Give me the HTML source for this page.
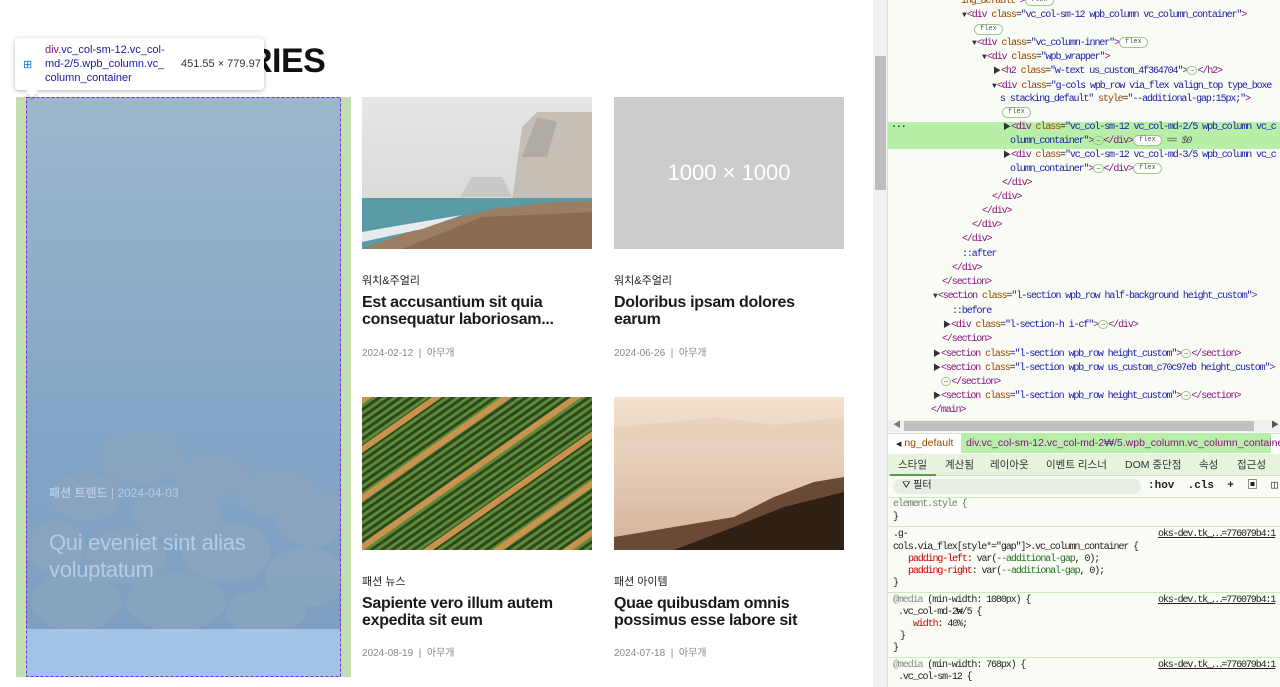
<!DOCTYPE html>
<html><head><meta charset="utf-8"><style>
*{margin:0;padding:0;box-sizing:border-box}
body{width:1280px;height:687px;overflow:hidden;background:#fff;font-family:"Liberation Sans","Noto Sans CJK KR",sans-serif;position:relative}
.a{position:absolute}
.cat{font-size:11px;color:#222}
.ttl{font-size:16px;font-weight:bold;color:#1a1a1a;line-height:17px;letter-spacing:-0.3px}
.meta{font-size:10px;color:#888}
.dt{position:absolute;left:887px;top:0;width:393px;height:687px;background:#f9fcf4;border-left:1px solid #cfe8c0;font-family:"Liberation Mono","Noto Sans CJK KR",monospace;font-size:10px;letter-spacing:-1.1px;color:#222;overflow:hidden}
.l{position:absolute;white-space:nowrap;line-height:14px}
.t{color:#881280}.n{color:#994500}.v{color:#1a1aa6}.b{color:#1a1aa6}
.fx{display:inline-block;border:1px solid #9bc98a;border-radius:7px;font-size:7px;line-height:9px;padding:0 5px;color:#555;vertical-align:middle;background:#fff;letter-spacing:0}
.dd{display:inline-block;border:1px solid #9bc98a;border-radius:5px;font-size:7px;line-height:7px;padding:0 2px;vertical-align:middle;letter-spacing:0}
.tri{font-size:8px;color:#333;letter-spacing:0}
</style></head><body>
<div class="a" style="left:248px;top:42px;font-size:34px;font-weight:bold;color:#111;letter-spacing:-0.5px">RIES</div>
<div class="a" style="left:16px;top:97px;width:335px;height:580px;background:#c3dfb1"></div>
<div class="a" style="left:26px;top:97px;width:315px;height:580px;overflow:hidden">
<svg width="315" height="580" viewBox="0 0 315 580">
<defs><linearGradient id="sky" x1="0" y1="0" x2="0" y2="1"><stop offset="0" stop-color="#9db7cd"/><stop offset="0.6" stop-color="#84a6c6"/><stop offset="1" stop-color="#7e9fc0"/></linearGradient></defs>
<rect width="315" height="532" fill="url(#sky)"/>
<g fill="#8aa5bf" opacity=".8">
<ellipse cx="115" cy="360" rx="42" ry="26"/>
<ellipse cx="185" cy="378" rx="36" ry="22"/>
<ellipse cx="60" cy="400" rx="35" ry="24"/>
<ellipse cx="150" cy="415" rx="45" ry="28"/>
<ellipse cx="250" cy="395" rx="40" ry="24"/>
<ellipse cx="285" cy="420" rx="35" ry="30"/>
<ellipse cx="30" cy="450" rx="30" ry="26"/>
<ellipse cx="100" cy="460" rx="40" ry="28"/>
<ellipse cx="200" cy="455" rx="45" ry="30"/>
<ellipse cx="280" cy="480" rx="40" ry="30"/>
<ellipse cx="50" cy="505" rx="45" ry="28"/>
<ellipse cx="150" cy="505" rx="50" ry="28"/>
<ellipse cx="240" cy="515" rx="40" ry="22"/>
</g>
<rect y="532" width="315" height="48" fill="#a0c3e6"/>
<rect x="0.5" y="0.5" width="314" height="579" fill="none" stroke="#7a2fd0" stroke-width="1" stroke-dasharray="3,2"/>
</svg>
<div class="a" style="left:23px;top:387px;font-size:12px;color:#b5cbe3"><b>패션 트렌드</b> | 2024-04-03</div>
<div class="a" style="left:23px;top:432px;font-size:22px;line-height:27px;color:#b5cbe6;letter-spacing:-0.3px">Qui eveniet sint alias<br>voluptatum</div>
</div>
<div class="a" style="left:15px;top:38px;width:249px;height:52px;background:#fff;border-radius:4px;box-shadow:0 1px 4px rgba(0,0,0,.3)"></div>
<div class="a" style="left:28px;top:88px;width:8px;height:8px;background:#fff;transform:rotate(45deg);box-shadow:2px 2px 2px rgba(0,0,0,.15)"></div>
<div class="a" style="left:23px;top:58px;font-size:11px;color:#1a73e8">⊞</div>
<div class="a" style="left:45px;top:43px;font-size:11px;line-height:14px;color:#1a1aa6"><span style="color:#881280">div</span>.vc_col-sm-12.vc_col-<br>md-2/5.wpb_column.vc_<br>column_container</div>
<div class="a" style="left:181px;top:58px;font-size:11px;color:#333">451.55 × 779.97</div>
<svg class="a" style="left:362px;top:97px" width="230" height="152" viewBox="0 0 230 152">
<defs><linearGradient id="fog" x1="0" y1="0" x2="0" y2="1"><stop offset="0" stop-color="#e6e7e5"/><stop offset="1" stop-color="#d3d6d4"/></linearGradient></defs>
<rect width="230" height="152" fill="url(#fog)"/>
<polygon points="98,100 110,80 140,80 150,100" fill="#c7c9c7"/>
<polygon points="150,105 160,30 175,15 230,15 230,110" fill="#c6bfb5"/>
<polygon points="160,60 175,20 195,25 185,60" fill="#9a9a94" opacity=".5"/>
<rect y="101" width="230" height="51" fill="#5a9ba6"/>
<polygon points="0,152 60,130 130,112 190,105 230,104 230,152" fill="#9c7f63"/>
<polygon points="0,135 40,128 100,118 60,132 0,145" fill="#e6ecee"/>
<polygon points="40,152 120,120 230,115 230,152" fill="#8a6b52"/>
</svg>
<div class="a" style="left:614px;top:97px;width:230px;height:152px;background:#cccccc;color:#fff;font-size:22px;text-align:center;line-height:152px">1000 × 1000</div>
<svg class="a" style="left:362px;top:397px" width="230" height="153" viewBox="0 0 230 153">
<defs><pattern id="row" width="6" height="6" patternUnits="userSpaceOnUse" patternTransform="rotate(55)"><rect width="6" height="6" fill="#2c4a1c"/><rect width="3" height="6" fill="#5e8a3a"/></pattern>
<pattern id="band" width="40" height="40" patternUnits="userSpaceOnUse" patternTransform="rotate(55)"><rect x="0" width="6" height="40" fill="#c9934e"/></pattern></defs>
<rect width="230" height="153" fill="url(#row)"/>
<rect width="230" height="153" fill="url(#band)"/>
</svg>
<svg class="a" style="left:614px;top:397px" width="230" height="153" viewBox="0 0 230 153">
<defs><linearGradient id="sep" x1="0" y1="0" x2="0" y2="1"><stop offset="0" stop-color="#f3e2cf"/><stop offset="1" stop-color="#d4b29a"/></linearGradient></defs>
<rect width="230" height="153" fill="url(#sep)"/>
<polygon points="0,30 60,25 100,20 160,28 230,20 230,45 0,45" fill="#e6cdb6" opacity=".6"/>
<polygon points="0,140 60,130 120,120 160,100 200,85 230,80 230,153 0,153" fill="#6a4a35"/>
<polygon points="60,153 120,130 170,110 230,95 230,153" fill="#2f1f15"/>
</svg>
<div class="a cat" style="left:362px;top:272px">워치&amp;주얼리</div>
<div class="a ttl" style="left:362px;top:294px">Est accusantium sit quia<br>consequatur laboriosam...</div>
<div class="a meta" style="left:362px;top:344px">2024-02-12 &nbsp;|&nbsp; 아무개</div>
<div class="a cat" style="left:614px;top:272px">워치&amp;주얼리</div>
<div class="a ttl" style="left:614px;top:294px">Doloribus ipsam dolores<br>earum</div>
<div class="a meta" style="left:614px;top:344px">2024-06-26 &nbsp;|&nbsp; 아무개</div>
<div class="a cat" style="left:362px;top:573px">패션 뉴스</div>
<div class="a ttl" style="left:362px;top:595px">Sapiente vero illum autem<br>expedita sit eum</div>
<div class="a meta" style="left:362px;top:644px">2024-08-19 &nbsp;|&nbsp; 아무개</div>
<div class="a cat" style="left:614px;top:573px">패션 아이템</div>
<div class="a ttl" style="left:614px;top:595px">Quae quibusdam omnis<br>possimus esse labore sit</div>
<div class="a meta" style="left:614px;top:644px">2024-07-18 &nbsp;|&nbsp; 아무개</div>
<div class="a" style="left:873px;top:0;width:14px;height:687px;background:#f1f1f1"></div>
<div class="a" style="left:875px;top:56px;width:11px;height:134px;background:#bdbdbd"></div>
<div class="dt">
<div class="a" style="left:0;top:122px;width:393px;height:27px;background:#b8efa8"></div>
<div class="l" style="left:73px;top:-5px"><span class="n">ing_default</span> <span class="t">&gt;</span><span class="fx">flex</span></div>
<div class="l" style="left:74px;top:9px"><span class="tri">▼</span><span class="t">&lt;div</span> <span class="n">class</span>=<span class="v">"vc_col-sm-12 wpb_column vc_column_container"</span><span class="t">&gt;</span></div>
<div class="l" style="left:86px;top:24px"><span class="fx">flex</span></div>
<div class="l" style="left:84px;top:37px"><span class="tri">▼</span><span class="t">&lt;div</span> <span class="n">class</span>=<span class="v">"vc_column-inner"</span><span class="t">&gt;</span><span class="fx">flex</span></div>
<div class="l" style="left:94px;top:51px"><span class="tri">▼</span><span class="t">&lt;div</span> <span class="n">class</span>=<span class="v">"wpb_wrapper"</span><span class="t">&gt;</span></div>
<div class="l" style="left:105px;top:65px"><span class="tri">▶</span><span class="t">&lt;h2</span> <span class="n">class</span>=<span class="v">"w-text us_custom_4f364704"</span><span class="t">&gt;</span><span class="dd">…</span><span class="t">&lt;/h2&gt;</span></div>
<div class="l" style="left:104px;top:80px"><span class="tri">▼</span><span class="t">&lt;div</span> <span class="n">class</span>=<span class="v">"g-cols wpb_row via_flex valign_top type_boxe</span></div>
<div class="l" style="left:112px;top:93px"><span class="v">s stacking_default"</span> <span class="n">style</span>=<span class="v">"--additional-gap:15px;"</span><span class="t">&gt;</span></div>
<div class="l" style="left:114px;top:107px"><span class="fx">flex</span></div>
<div class="l" style="left:3px;top:121px;font-weight:bold">···</div>
<div class="l" style="left:115px;top:121px"><span class="tri">▶</span><span class="t">&lt;div</span> <span class="n">class</span>=<span class="v">"vc_col-sm-12 vc_col-md-2/5 wpb_column vc_c</span></div>
<div class="l" style="left:122px;top:135px"><span class="v">olumn_container"</span><span class="t">&gt;</span><span class="dd">…</span><span class="t">&lt;/div&gt;</span><span class="fx">flex</span> <i style="color:#555">== $0</i></div>
<div class="l" style="left:115px;top:149px"><span class="tri">▶</span><span class="t">&lt;div</span> <span class="n">class</span>=<span class="v">"vc_col-sm-12 vc_col-md-3/5 wpb_column vc_c</span></div>
<div class="l" style="left:122px;top:163px"><span class="v">olumn_container"</span><span class="t">&gt;</span><span class="dd">…</span><span class="t">&lt;/div&gt;</span><span class="fx">flex</span></div>
<div class="l" style="left:114px;top:177px"><span class="t">&lt;/div&gt;</span></div>
<div class="l" style="left:104px;top:191px"><span class="t">&lt;/div&gt;</span></div>
<div class="l" style="left:94px;top:205px"><span class="t">&lt;/div&gt;</span></div>
<div class="l" style="left:84px;top:219px"><span class="t">&lt;/div&gt;</span></div>
<div class="l" style="left:74px;top:233px"><span class="t">&lt;/div&gt;</span></div>
<div class="l" style="left:74px;top:248px"><span class="b">::after</span></div>
<div class="l" style="left:64px;top:262px"><span class="t">&lt;/div&gt;</span></div>
<div class="l" style="left:54px;top:276px"><span class="t">&lt;/section&gt;</span></div>
<div class="l" style="left:45px;top:290px"><span class="tri">▼</span><span class="t">&lt;section</span> <span class="n">class</span>=<span class="v">"l-section wpb_row half-background height_custom"</span><span class="t">&gt;</span></div>
<div class="l" style="left:64px;top:305px"><span class="b">::before</span></div>
<div class="l" style="left:55px;top:319px"><span class="tri">▶</span><span class="t">&lt;div</span> <span class="n">class</span>=<span class="v">"l-section-h i-cf"</span><span class="t">&gt;</span><span class="dd">…</span><span class="t">&lt;/div&gt;</span></div>
<div class="l" style="left:54px;top:333px"><span class="t">&lt;/section&gt;</span></div>
<div class="l" style="left:45px;top:348px"><span class="tri">▶</span><span class="t">&lt;section</span> <span class="n">class</span>=<span class="v">"l-section wpb_row height_custom"</span><span class="t">&gt;</span><span class="dd">…</span><span class="t">&lt;/section&gt;</span></div>
<div class="l" style="left:45px;top:362px"><span class="tri">▶</span><span class="t">&lt;section</span> <span class="n">class</span>=<span class="v">"l-section wpb_row us_custom_c70c97eb height_custom"</span><span class="t">&gt;</span></div>
<div class="l" style="left:53px;top:376px"><span class="dd">…</span><span class="t">&lt;/section&gt;</span></div>
<div class="l" style="left:45px;top:390px"><span class="tri">▶</span><span class="t">&lt;section</span> <span class="n">class</span>=<span class="v">"l-section wpb_row height_custom"</span><span class="t">&gt;</span><span class="dd">…</span><span class="t">&lt;/section&gt;</span></div>
<div class="l" style="left:43px;top:404px"><span class="t">&lt;/main&gt;</span></div>
<div class="a" style="left:0;top:420px;width:393px;height:12px;background:#f1f1f1"></div>
<div class="a" style="left:16px;top:421px;width:350px;height:10px;background:#c1c1c1"></div>
<div class="a" style="left:5px;top:419px;font-size:8px;color:#777">◀</div>
<div class="a" style="left:383px;top:419px;font-size:8px;color:#555">▶</div>
<div class="a" style="left:0;top:433px;width:393px;height:20px;background:#fff;border-top:1px solid #ddd"></div>
<div class="a" style="left:73px;top:433px;width:310px;height:20px;background:#b8efa8"></div>
<div class="l" style="left:8px;top:436px;font-family:'Liberation Sans',sans-serif;font-size:10.5px;letter-spacing:0"><span style="font-size:7px">◀</span> <span class="n">ng_default</span></div>
<div class="l" style="left:78px;top:436px;font-family:'Liberation Sans',sans-serif;font-size:10.5px;letter-spacing:0;color:#881280">div.vc_col-sm-12.vc_col-md-2₩/5.wpb_column.vc_column_container</div>
<div class="a" style="left:0;top:454px;width:393px;height:22px;background:#e6f3dd;border-bottom:1px solid #cfe3c0"></div>
<div class="a" style="left:2px;top:474px;width:46px;height:2px;background:#5a9a48"></div>
<div class="l" style="left:10px;top:458px;font-family:'Liberation Sans','Noto Sans CJK KR',sans-serif;font-size:10.5px;letter-spacing:0;color:#333">스타일</div>
<div class="l" style="left:57px;top:458px;font-family:'Liberation Sans','Noto Sans CJK KR',sans-serif;font-size:10.5px;letter-spacing:0;color:#333">계산됨</div>
<div class="l" style="left:102px;top:458px;font-family:'Liberation Sans','Noto Sans CJK KR',sans-serif;font-size:10.5px;letter-spacing:0;color:#333">레이아웃</div>
<div class="l" style="left:158px;top:458px;font-family:'Liberation Sans','Noto Sans CJK KR',sans-serif;font-size:10.5px;letter-spacing:0;color:#333">이벤트 리스너</div>
<div class="l" style="left:237px;top:458px;font-family:'Liberation Sans','Noto Sans CJK KR',sans-serif;font-size:10.5px;letter-spacing:0;color:#333">DOM 중단점</div>
<div class="l" style="left:311px;top:458px;font-family:'Liberation Sans','Noto Sans CJK KR',sans-serif;font-size:10.5px;letter-spacing:0;color:#333">속성</div>
<div class="l" style="left:349px;top:458px;font-family:'Liberation Sans','Noto Sans CJK KR',sans-serif;font-size:10.5px;letter-spacing:0;color:#333">접근성</div>
<div class="a" style="left:5px;top:479px;width:248px;height:15px;background:#e9eee4;border-radius:8px"></div>
<div class="l" style="left:14px;top:479px;font-family:'Liberation Sans','Noto Sans CJK KR',sans-serif;font-size:10px;letter-spacing:0">⛛ 필터</div>
<div class="l" style="left:260px;top:479px;font-size:11px;font-weight:bold;letter-spacing:0">:hov &nbsp;.cls &nbsp;+ &nbsp;▣ &nbsp;◫</div>
<div class="a" style="left:0;top:497px;width:393px;height:1px;background:#cfe8c0"></div>
<div class="l" style="left:5px;top:498px;color:#777">element.style {</div>
<div class="l" style="left:5px;top:511px">}</div>
<div class="a" style="left:0;top:526px;width:393px;height:1px;background:#cfe8c0"></div>
<div class="l" style="left:5px;top:528px">.g-</div>
<div class="l" style="left:270px;top:528px;text-decoration:underline">oks-dev.tk_⋯=776079b4:1</div>
<div class="l" style="left:5px;top:541px">cols.via_flex[style*="gap"]&gt;.vc_column_container {</div>
<div class="l" style="left:20px;top:553px"><span style="color:#c80000">padding-left</span>: var(<span style="color:#236e25">--additional-gap</span>, 0);</div>
<div class="l" style="left:20px;top:565px"><span style="color:#c80000">padding-right</span>: var(<span style="color:#236e25">--additional-gap</span>, 0);</div>
<div class="l" style="left:5px;top:577px">}</div>
<div class="a" style="left:0;top:592px;width:393px;height:1px;background:#cfe8c0"></div>
<div class="l" style="left:5px;top:594px"><span style="color:#888">@media</span> (min-width: 1080px) {</div>
<div class="l" style="left:270px;top:594px;text-decoration:underline">oks-dev.tk_⋯=776079b4:1</div>
<div class="l" style="left:10px;top:606px">.vc_col-md-2₩/5 {</div>
<div class="l" style="left:25px;top:618px"><span style="color:#c80000">width</span>: 40%;</div>
<div class="l" style="left:12px;top:630px">}</div>
<div class="l" style="left:5px;top:642px">}</div>
<div class="a" style="left:0;top:657px;width:393px;height:1px;background:#cfe8c0"></div>
<div class="l" style="left:5px;top:659px"><span style="color:#888">@media</span> (min-width: 768px) {</div>
<div class="l" style="left:270px;top:659px;text-decoration:underline">oks-dev.tk_⋯=776079b4:1</div>
<div class="l" style="left:10px;top:671px">.vc_col-sm-12 {</div>
</div>
</body></html>
